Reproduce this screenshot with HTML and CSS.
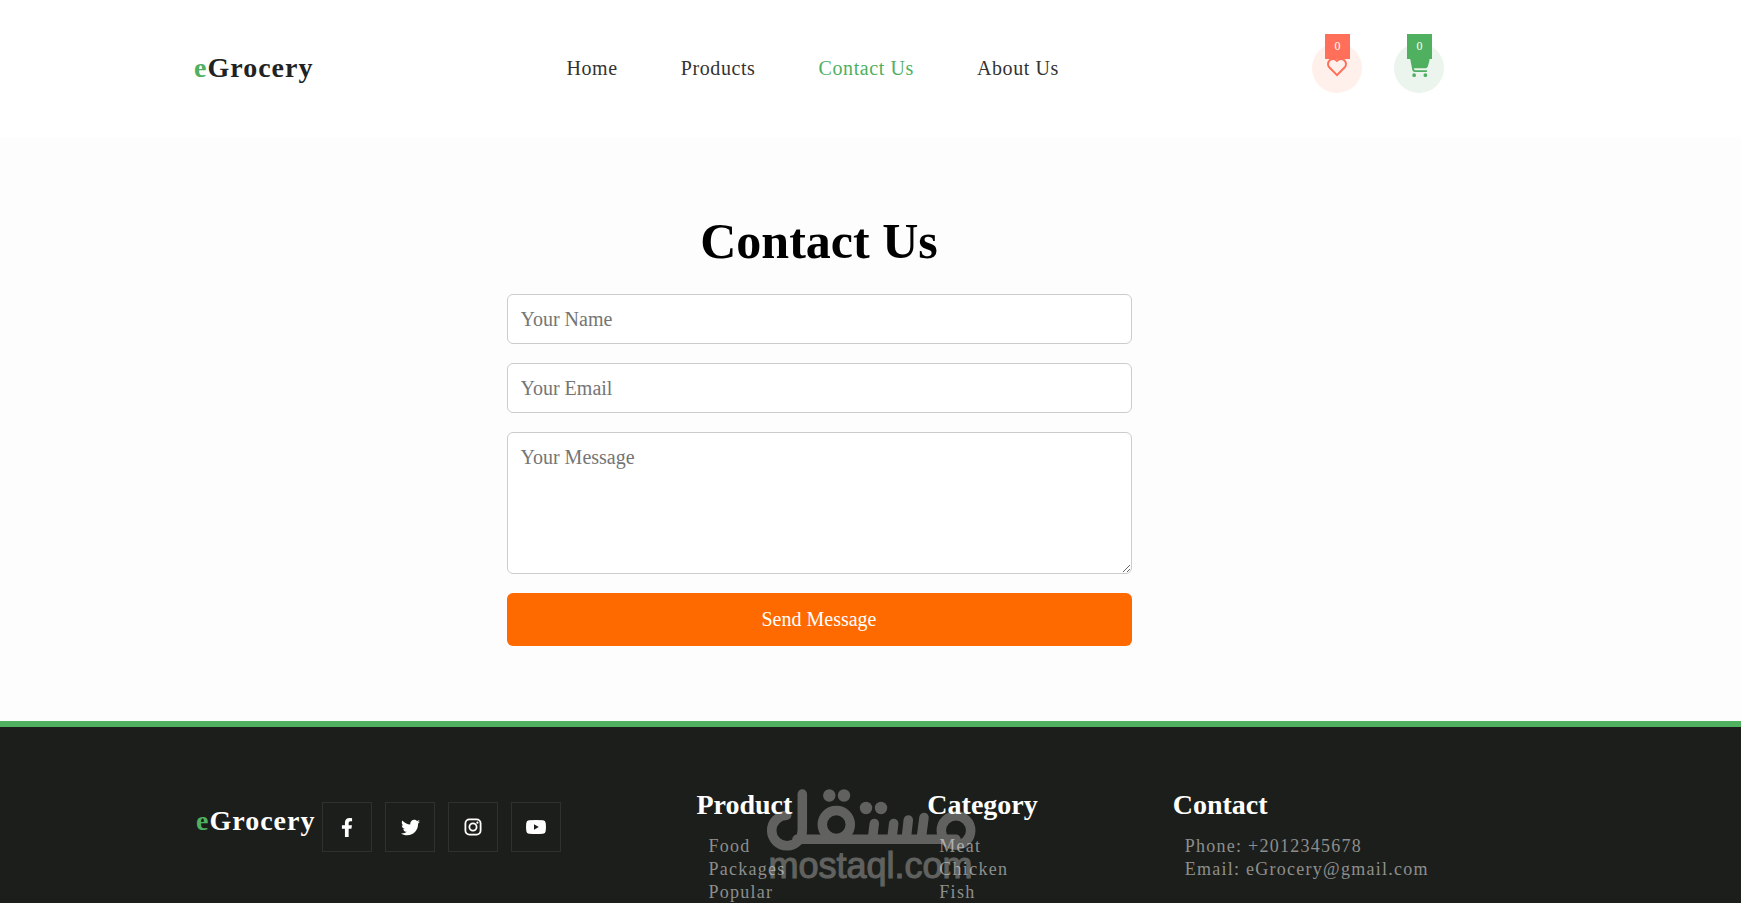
FILE: index.html
```html
<!DOCTYPE html>
<html lang="en">
<head>
  <meta charset="utf-8">
  <meta name="viewport" content="width=device-width, initial-scale=1">
  <title>eGrocery - Contact Us</title>
  <link rel="stylesheet" href="styles.css">
</head>
<body>
  <header class="header">
    <div class="container header-bar">
      <a class="logo" href="#"><span class="logo-accent">e</span>Grocery</a>
      <nav class="nav">
        <a class="nav-link" href="#">Home</a>
        <a class="nav-link" href="#">Products</a>
        <a class="nav-link active" href="#" aria-current="page">Contact Us</a>
        <a class="nav-link" href="#">About Us</a>
      </nav>
      <div class="actions">
        <button class="action wishlist" type="button" aria-label="Wishlist">
          <svg width="24" height="24" viewBox="0 0 24 24" fill="currentColor" aria-hidden="true"><path d="M12.001 4.529c2.349-2.109 5.979-2.039 8.242.228 2.262 2.268 2.34 5.88.236 8.236l-8.48 8.492-8.478-8.492c-2.104-2.356-2.025-5.974.236-8.236 2.265-2.264 5.888-2.34 8.244-.228zm6.826 1.641c-1.5-1.502-3.92-1.563-5.49-.153l-1.335 1.198-1.336-1.197c-1.575-1.412-3.991-1.35-5.494.154-1.49 1.49-1.565 3.875-.192 5.451L12 18.654l7.02-7.03c1.374-1.577 1.299-3.959-.193-5.454z"/></svg>
          <span class="badge">0</span>
        </button>
        <button class="action cart" type="button" aria-label="Cart">
          <svg width="23" height="20" viewBox="0 0 576 512" fill="currentColor" aria-hidden="true"><path d="M0 24C0 10.7 10.7 0 24 0H69.500c22 0 41.500 12.800 50.600 32h411c26.300 0 45.500 25 38.600 50.400l-41 152.300c-8.500 31.400-37 53.300-69.500 53.300H170.700l5.400 28.500c2.200 11.300 12.100 19.500 23.600 19.500H488c13.300 0 24 10.700 24 24s-10.700 24-24 24H199.700c-34.600 0-64.300-24.600-70.700-58.500L77.400 54.500c-.7-3.800-4-6.500-7.900-6.500H24C10.700 48 0 37.300 0 24zM128 464a48 48 0 1 1 96 0 48 48 0 1 1-96 0zm336-48a48 48 0 1 1 0 96 48 48 0 1 1 0-96z"/></svg>
          <span class="badge">0</span>
        </button>
      </div>
    </div>
  </header>

  <main class="main">
    <h1 class="title">Contact Us</h1>
    <form class="form">
      <input class="field" type="text" placeholder="Your Name" aria-label="Your Name">
      <input class="field" type="email" placeholder="Your Email" aria-label="Your Email">
      <textarea class="field message" placeholder="Your Message" aria-label="Your Message"></textarea>
      <button class="send" type="submit">Send Message</button>
    </form>
  </main>

  <footer class="footer">
    <div class="container footer-grid">
      <div class="brand">
        <a class="logo logo-light" href="#"><span class="logo-accent">e</span>Grocery</a>
        <div class="social">
          <a class="social-link" href="#" aria-label="Facebook"><svg width="12" height="19" viewBox="0 0 320 512" fill="currentColor" aria-hidden="true"><path d="M279.140 288l14.220-92.660h-88.910v-60.130c0-25.350 12.420-50.060 52.240-50.060h40.420V6.260S260.430 0 225.360 0c-73.220 0-121.080 44.380-121.080 124.720v70.620H22.890V288h81.390v224h100.170V288z"/></svg></a>
          <a class="social-link" href="#" aria-label="Twitter"><svg width="19" height="19" viewBox="0 0 512 512" fill="currentColor" aria-hidden="true"><path d="M459.370 151.716c.325 4.548.325 9.097.325 13.645 0 138.720-105.583 298.558-298.558 298.558-59.452 0-114.680-17.219-161.137-47.106 8.447.974 16.568 1.299 25.340 1.299 49.055 0 94.213-16.568 130.274-44.832-46.132-.975-84.792-31.188-98.112-72.772 6.498.974 12.995 1.624 19.818 1.624 9.421 0 18.843-1.300 27.614-3.573-48.081-9.747-84.143-51.980-84.143-102.985v-1.299c13.969 7.797 30.214 12.670 47.431 13.319-28.264-18.843-46.781-51.005-46.781-87.391 0-19.492 5.197-37.360 14.294-52.954 51.655 63.675 129.300 105.258 216.365 109.807-1.624-7.797-2.599-15.918-2.599-24.040 0-57.828 46.782-104.934 104.934-104.934 30.213 0 57.502 12.670 76.670 33.137 23.715-4.548 46.456-13.320 66.599-25.340-7.798 24.366-24.366 44.833-46.132 57.827 21.117-2.273 41.584-8.122 60.426-16.243-14.292 20.791-32.161 39.308-52.628 54.253z"/></svg></a>
          <a class="social-link" href="#" aria-label="Instagram"><svg width="18" height="18" viewBox="0 0 18 18" fill="none" stroke="currentColor" stroke-width="1.800" aria-hidden="true"><rect x="1.400" y="1.400" width="15.200" height="15.200" rx="4"/><circle cx="9" cy="9" r="3.600"/><circle cx="13.400" cy="4.700" r="1.100" fill="currentColor" stroke="none"/></svg></a>
          <a class="social-link" href="#" aria-label="YouTube"><svg width="20" height="14" viewBox="0 0 20 14" aria-hidden="true"><path fill="currentColor" fill-rule="evenodd" d="M3 .3Q10-.3 17 .3Q19.500.5 19.700 3Q20.200 7 19.700 11Q19.500 13.500 17 13.700Q10 14.300 3 13.700Q.5 13.500.3 11Q-.2 7 .3 3Q.5.5 3 .3ZM8 4.200V9.800L12.800 7Z"/></svg></a>
        </div>
      </div>
      <section class="links">
        <h2 class="links-title">Product</h2>
        <ul class="links-list">
          <li><a href="#">Food</a></li>
          <li><a href="#">Packages</a></li>
          <li><a href="#">Popular</a></li>
        </ul>
      </section>
      <section class="links">
        <h2 class="links-title">Category</h2>
        <ul class="links-list">
          <li><a href="#">Meat</a></li>
          <li><a href="#">Chicken</a></li>
          <li><a href="#">Fish</a></li>
        </ul>
      </section>
      <section class="links">
        <h2 class="links-title">Contact</h2>
        <ul class="links-list">
          <li>Phone: +2012345678</li>
          <li>Email: eGrocery@gmail.com</li>
        </ul>
      </section>
    </div>
    <div class="watermark">
      <svg class="watermark-logo" width="220" height="72" viewBox="0 0 220 72" fill="none" stroke="currentColor" stroke-width="9.500" stroke-linecap="round" aria-hidden="true">
        <path d="M41.300 14V50.300A15.300 15.300 0 1 1 25.700 35.200M36 59.300H195M113.300 43.500L111.500 58M132.700 43.500L131 58M147.300 40L145.300 58M163 37.500L160.300 58"/>
        <circle cx="75.300" cy="44.500" r="14"/>
        <circle cx="195" cy="50.500" r="14.700"/>
        <g fill="currentColor" stroke="none"><circle cx="68.300" cy="15.500" r="6.200"/><circle cx="83" cy="15.500" r="6.200"/><circle cx="105" cy="28" r="6.200"/><circle cx="120" cy="28" r="6.200"/></g>
      </svg>
      <span class="watermark-text">mostaql.com</span>
    </div>
  </footer>
</body>
</html>
```
FILE: styles.css
```css
* {
  box-sizing: border-box;
  margin: 0;
  padding: 0;
}

body {
  display: flex;
  flex-direction: column;
  min-height: 100vh;
  background: #fdfdfd;
  font-family: "Liberation Serif", "Times New Roman", serif;
  font-size: 20px;
  line-height: 23px;
}

a {
  color: inherit;
  text-decoration: none;
}

button,
input,
textarea {
  font: inherit;
}

.header,
.main,
.footer {
  padding-right: 103px;
}

.container {
  max-width: 1250px;
  margin: 0 auto;
}

/* Header */
.header {
  background: #fff;
}

.header-bar {
  display: flex;
  align-items: center;
  justify-content: space-between;
  padding: 43px 0 44px;
}

.logo {
  color: #222;
  font-size: 28px;
  font-weight: 700;
  line-height: 32px;
  letter-spacing: 1px;
}

.logo-light {
  color: #fff;
}

.logo-accent {
  color: #4fb060;
}

.nav {
  display: flex;
  gap: 63px;
  color: #333;
  letter-spacing: 0.03em;
}

.active {
  color: #4fb060;
}

.actions {
  display: flex;
  gap: 32px;
}

.action {
  position: relative;
  display: flex;
  align-items: center;
  justify-content: center;
  width: 50px;
  height: 50px;
  padding-bottom: 2px;
  border: 0;
  border-radius: 50%;
}

.wishlist {
  background: #fff0eb;
  color: #ff6f59;
}

.cart {
  background: #ebf5ee;
  color: #4fb060;
}

.badge {
  position: absolute;
  top: -9px;
  left: 13px;
  width: 25px;
  height: 25px;
  background: currentColor;
  font-size: 12px;
  line-height: 24px;
  text-align: center;
}

.badge::first-letter {
  color: #fff;
}

/* Contact form */
.main {
  padding-top: 75px;
  padding-bottom: 75px;
}

.title {
  margin-bottom: 24px;
  color: #000;
  font-size: 50px;
  line-height: 58px;
  text-align: center;
}

.form {
  display: flex;
  flex-direction: column;
  gap: 19px;
  max-width: 625px;
  margin: 0 auto;
}

.field {
  width: 100%;
  padding: 13px;
  border: 1px solid #ccc;
  border-radius: 6px;
  background: #fff;
  color: #333;
}

input.field {
  height: 50px;
}

.field::placeholder {
  color: #757575;
}

.message {
  display: block;
  height: 142px;
  resize: vertical;
}

.send {
  padding: 15px;
  border: 0;
  border-radius: 6px;
  background: #ff6a00;
  color: #fff;
}

/* Footer */
.footer {
  position: relative;
  flex: 1;
  border-top: 6px solid #4fb060;
  background: #1c1e1b;
  color: #fff;
}

.footer-grid {
  display: flex;
  gap: 135px;
  padding: 62px 0 0 2px;
}

.brand {
  display: flex;
  align-items: flex-start;
  gap: 7px;
  padding-top: 13px;
}

.brand .logo {
  padding-top: 3px;
}

.social {
  display: flex;
  gap: 13px;
}

.social-link {
  display: flex;
  align-items: center;
  justify-content: center;
  width: 50px;
  height: 50px;
  border: 1px solid #2f312e;
}

.links-title {
  margin-bottom: 14px;
  font-size: 28px;
  line-height: 32px;
}

.links-list {
  padding-left: 12px;
  color: #8d8e8d;
  font-size: 18px;
  letter-spacing: 0.07em;
  list-style: none;
  white-space: nowrap;
}

.watermark {
  position: absolute;
  top: 53px;
  left: 0;
  right: 0;
  display: flex;
  flex-direction: column;
  align-items: center;
  color: #fff;
  opacity: 0.3;
  pointer-events: none;
}

.watermark-text {
  font-family: "Liberation Sans", Arial, sans-serif;
  font-size: 36px;
  line-height: 28px;
  -webkit-text-stroke: 1px currentColor;
}
```
